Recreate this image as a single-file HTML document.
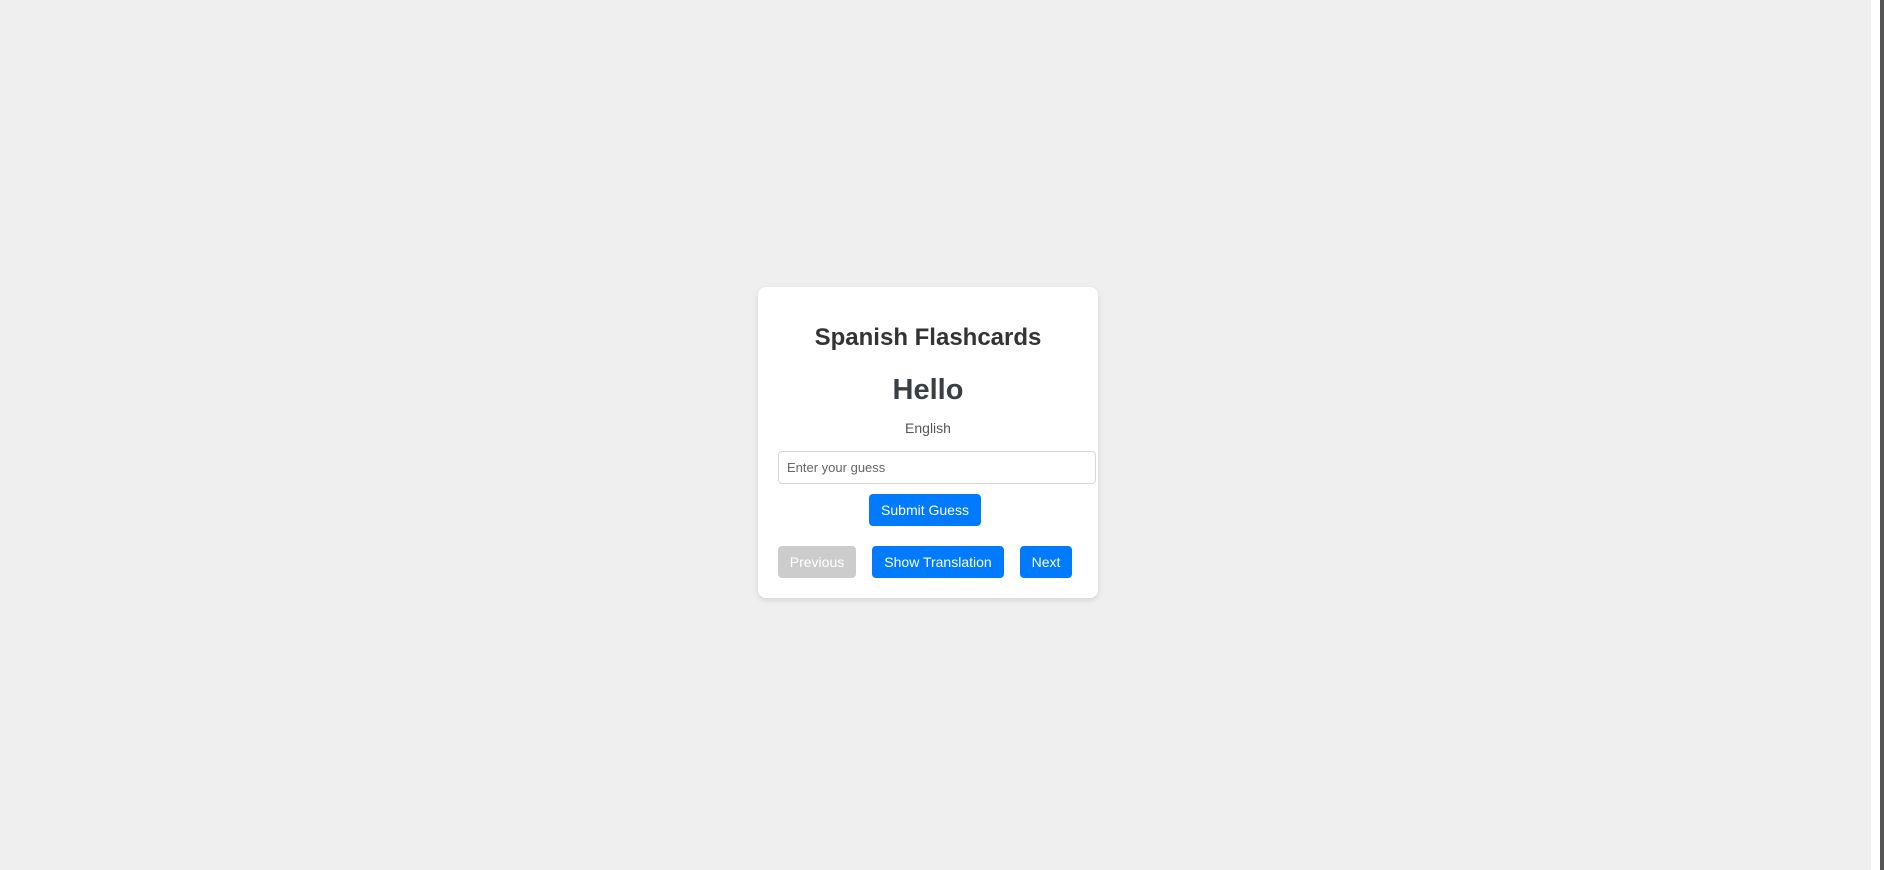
<!DOCTYPE html>
<html><head><style>
body{margin:0;width:1884px;height:870px;background:#efefef;font-family:"Liberation Sans",Arial,sans-serif;position:relative;overflow:hidden}
.sb{position:absolute;left:1871px;top:0;width:9px;height:870px;background:#fff}
.sb2{position:absolute;left:1880px;top:0;width:4px;height:870px;background:#555}
.card{position:absolute;left:758px;top:287px;width:340px;height:311px;background:#fff;border-radius:8px;box-shadow:0 2px 6px rgba(0,0,0,.12)}
.t{position:absolute;left:0;width:340px;text-align:center;font-weight:bold}
.btn{position:absolute;height:32px;border-radius:4px;color:#fff;background:#007bff;font-size:14px;line-height:32px;text-align:center}
</style></head><body>
<div class="sb"></div><div class="sb2"></div>
<div class="card">
<div class="t" style="top:37px;font-size:24px;color:#333">Spanish Flashcards</div>
<div class="t" style="top:87px;font-size:29px;color:#3a3f44">Hello</div>
<div class="t" style="top:133px;font-size:14px;font-weight:normal;color:#555">English</div>
<div style="position:absolute;left:20px;top:164px;height:31px;border:1px solid #d8d8d8;border-radius:4px;font-size:13px;color:#666;line-height:31px;padding-left:8px;width:308px">Enter your guess</div>
<div class="btn" style="left:111px;top:207px;width:112px">Submit Guess</div>
<div class="btn" style="left:20px;top:259px;width:78px;background:#ccc">Previous</div>
<div class="btn" style="left:114px;top:259px;width:132px">Show Translation</div>
<div class="btn" style="left:262px;top:259px;width:52px">Next</div>
</div>
</body></html>
